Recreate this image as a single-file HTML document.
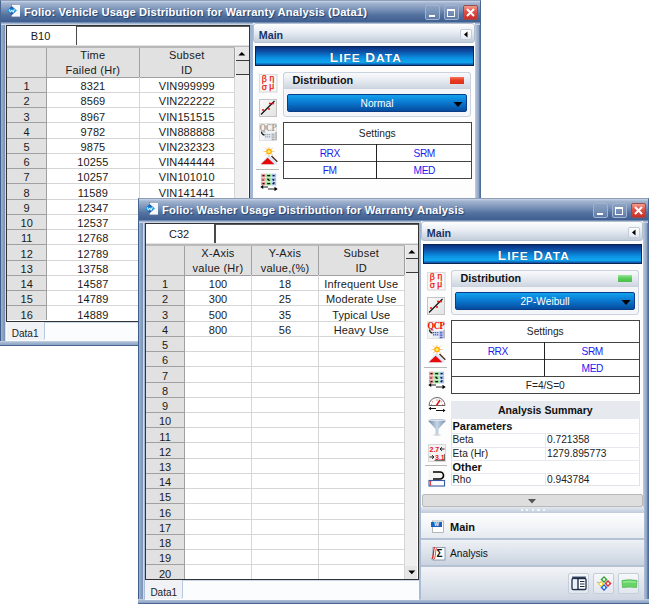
<!DOCTYPE html><html><head><meta charset="utf-8"><style>
html,body{margin:0;padding:0;}
body{width:650px;height:605px;position:relative;overflow:hidden;background:#fff;font-family:"Liberation Sans",sans-serif;}
div{position:absolute;}
.t{white-space:nowrap;line-height:1;}
.ct{display:flex;align-items:center;justify-content:center;text-align:center;white-space:nowrap;}
</style></head><body>
<div style="left:0.00px;top:0.00px;width:481.00px;height:346.00px;background:linear-gradient(#9fb2cf,#a9bbd5);border:1px solid #4a6792;border-top-color:#8d9fbb;box-sizing:border-box;"></div>
<div style="left:0.00px;top:24.00px;width:5.70px;height:322.00px;background:linear-gradient(90deg,#3e5e8c 0,#3e5e8c 1px,#9bb0cc 1.3px,#7c94b8 4.5px,#d0dcea 4.8px,#d0dcea 5.7px);"></div>
<div style="left:475.00px;top:24.00px;width:6.00px;height:322.00px;background:linear-gradient(90deg,#c0cee0 0,#a8bad4 1.5px,#90a6c4 3.5px,#5a76a0 4.8px,#4a6894 6px);"></div>
<div style="left:0.00px;top:341.00px;width:481.00px;height:5.00px;background:linear-gradient(#c8d4e4 0,#a8bad4 1.5px,#90a6c4 3.5px,#4a6894 4px,#4a6894 5px);"></div>
<div style="left:1.00px;top:1.00px;width:479.00px;height:20.70px;background:linear-gradient(#c9d5e5 0px,#a3b5d0 2px,#7d95ba 8px,#54729f 14px,#3f5f92 20.7px);"></div>
<div style="left:1.00px;top:21.70px;width:479.00px;height:3.10px;background:linear-gradient(#5a78a6,#a9bbd4 55%,#dfe6ef);"></div>
<svg style="position:absolute;left:6px;top:4px" width="14" height="14" viewBox="0 0 14 14"><defs><linearGradient id="dg" x1="0" y1="0" x2="0" y2="1"><stop offset="0" stop-color="#0a3a98"/><stop offset="0.5" stop-color="#22a6ee"/><stop offset="1" stop-color="#0a3a98"/></linearGradient></defs><rect x="5.5" y="0.3" width="9" height="12.6" fill="#f6f8fc" stroke="#6a7890" stroke-width="0.5"/><path d="M5.8 2.2 L11 6.6 L5.8 11 L0.6 6.6 Z" fill="url(#dg)"/><path d="M3.3 5.2 L4.4 8.3 L5.8 6 L7.2 8.3 L8.3 5.2" stroke="#fff" stroke-width="1" fill="none" opacity="0.9"/></svg>
<div class="t" style="left:24.00px;top:6.60px;color:#fff;font-weight:bold;font-size:11.2px;text-shadow:1px 1px 1px #23406e;letter-spacing:0.15px;">Folio: Vehicle Usage Distribution for Warranty Analysis (Data1)</div>
<div style="left:424.50px;top:5.00px;width:15.00px;height:15.00px;background:linear-gradient(#8ea3c3,#5f7ca8);border:1px solid #9fb3d1;box-sizing:border-box;border-radius:2px;"></div>
<div style="left:428.50px;top:15.00px;width:6.00px;height:2.00px;background:#fff;"></div>
<div style="left:443.50px;top:5.00px;width:15.00px;height:15.00px;background:linear-gradient(#8ea3c3,#5f7ca8);border:1px solid #9fb3d1;box-sizing:border-box;border-radius:2px;"></div>
<div style="left:447.00px;top:8.50px;width:8.00px;height:8.00px;border:1.2px solid #fff;border-top-width:2.5px;box-sizing:border-box;"></div>
<div style="left:462.50px;top:5.00px;width:15.00px;height:15.00px;background:linear-gradient(#f0a090,#e0544a 40%,#c8302a);border:1px solid #9a4a48;box-sizing:border-box;border-radius:2px;"></div>
<svg style="position:absolute;left:462.5px;top:5px" width="15" height="15"><path d="M4 4 L11 11 M11 4 L4 11" stroke="#fff" stroke-width="2"/></svg>
<div style="left:6.00px;top:24.80px;width:244.30px;height:316.20px;background:#fff;"></div>
<div style="left:6.00px;top:24.80px;width:244.30px;height:21.00px;background:#fff;border:1px solid #333;border-bottom:none;box-sizing:border-box;"></div>
<div class="ct" style="left:7.00px;top:26.60px;width:67.00px;height:18.20px;font-size:11px;color:#1a1a1a;">B10</div>
<div style="left:75.50px;top:25.80px;width:173.80px;height:1.60px;background:#5a5a5a;"></div>
<div style="left:75.50px;top:25.80px;width:1.60px;height:18.80px;background:#4a4a4a;"></div>
<div style="left:7.00px;top:44.80px;width:242.30px;height:1.00px;background:#e2e2e2;"></div>
<div style="left:7.00px;top:45.80px;width:242.30px;height:1.90px;background:#b9b9b9;"></div>
<div style="left:6.00px;top:45.80px;width:244.30px;height:276.00px;border:1.3px solid #333;border-top:none;box-sizing:border-box;"></div>
<div style="left:7.00px;top:47.70px;width:227.00px;height:29.60px;background:#e1e1e1;"></div>
<div style="left:7.00px;top:77.30px;width:39.30px;height:243.20px;background:#e1e1e1;"></div>
<div style="left:7.00px;top:77.00px;width:39.30px;height:1.00px;background:#a0a0a0;"></div>
<div style="left:46.30px;top:77.00px;width:187.70px;height:1.00px;background:#a0a0a0;"></div>
<div style="left:7.00px;top:92.00px;width:39.30px;height:1.00px;background:#a0a0a0;"></div>
<div style="left:46.30px;top:92.00px;width:187.70px;height:1.00px;background:#d6d6d6;"></div>
<div style="left:7.00px;top:107.00px;width:39.30px;height:1.00px;background:#a0a0a0;"></div>
<div style="left:46.30px;top:107.00px;width:187.70px;height:1.00px;background:#d6d6d6;"></div>
<div style="left:7.00px;top:122.00px;width:39.30px;height:1.00px;background:#a0a0a0;"></div>
<div style="left:46.30px;top:122.00px;width:187.70px;height:1.00px;background:#d6d6d6;"></div>
<div style="left:7.00px;top:138.00px;width:39.30px;height:1.00px;background:#a0a0a0;"></div>
<div style="left:46.30px;top:138.00px;width:187.70px;height:1.00px;background:#d6d6d6;"></div>
<div style="left:7.00px;top:153.00px;width:39.30px;height:1.00px;background:#a0a0a0;"></div>
<div style="left:46.30px;top:153.00px;width:187.70px;height:1.00px;background:#d6d6d6;"></div>
<div style="left:7.00px;top:168.00px;width:39.30px;height:1.00px;background:#a0a0a0;"></div>
<div style="left:46.30px;top:168.00px;width:187.70px;height:1.00px;background:#d6d6d6;"></div>
<div style="left:7.00px;top:183.00px;width:39.30px;height:1.00px;background:#a0a0a0;"></div>
<div style="left:46.30px;top:183.00px;width:187.70px;height:1.00px;background:#d6d6d6;"></div>
<div style="left:7.00px;top:199.00px;width:39.30px;height:1.00px;background:#a0a0a0;"></div>
<div style="left:46.30px;top:199.00px;width:187.70px;height:1.00px;background:#d6d6d6;"></div>
<div style="left:7.00px;top:214.00px;width:39.30px;height:1.00px;background:#a0a0a0;"></div>
<div style="left:46.30px;top:214.00px;width:187.70px;height:1.00px;background:#d6d6d6;"></div>
<div style="left:7.00px;top:229.00px;width:39.30px;height:1.00px;background:#a0a0a0;"></div>
<div style="left:46.30px;top:229.00px;width:187.70px;height:1.00px;background:#d6d6d6;"></div>
<div style="left:7.00px;top:244.00px;width:39.30px;height:1.00px;background:#a0a0a0;"></div>
<div style="left:46.30px;top:244.00px;width:187.70px;height:1.00px;background:#d6d6d6;"></div>
<div style="left:7.00px;top:260.00px;width:39.30px;height:1.00px;background:#a0a0a0;"></div>
<div style="left:46.30px;top:260.00px;width:187.70px;height:1.00px;background:#d6d6d6;"></div>
<div style="left:7.00px;top:275.00px;width:39.30px;height:1.00px;background:#a0a0a0;"></div>
<div style="left:46.30px;top:275.00px;width:187.70px;height:1.00px;background:#d6d6d6;"></div>
<div style="left:7.00px;top:290.00px;width:39.30px;height:1.00px;background:#a0a0a0;"></div>
<div style="left:46.30px;top:290.00px;width:187.70px;height:1.00px;background:#d6d6d6;"></div>
<div style="left:7.00px;top:305.00px;width:39.30px;height:1.00px;background:#a0a0a0;"></div>
<div style="left:46.30px;top:305.00px;width:187.70px;height:1.00px;background:#d6d6d6;"></div>
<div style="left:46.00px;top:47.70px;width:1.00px;height:29.60px;background:#a0a0a0;"></div>
<div style="left:46.00px;top:77.30px;width:1.00px;height:243.20px;background:#a0a0a0;"></div>
<div style="left:139.00px;top:47.70px;width:1.00px;height:29.60px;background:#a0a0a0;"></div>
<div style="left:139.00px;top:77.30px;width:1.00px;height:243.20px;background:#d6d6d6;"></div>
<div style="left:234.00px;top:47.70px;width:1.00px;height:29.60px;background:#a0a0a0;"></div>
<div style="left:234.00px;top:77.30px;width:1.00px;height:243.20px;background:#d6d6d6;"></div>
<div class="ct" style="left:46.30px;top:48.10px;width:93.20px;height:30.20px;font-size:11px;color:#1a1a1a;line-height:15px;letter-spacing:0.25px;">Time<br>Failed (Hr)</div>
<div class="ct" style="left:139.50px;top:48.10px;width:94.50px;height:30.20px;font-size:11px;color:#1a1a1a;line-height:15px;letter-spacing:0.25px;">Subset<br>ID</div>
<div class="ct" style="left:7.00px;top:78.50px;width:39.30px;height:15.23px;font-size:11px;color:#1a1a1a;">1</div>
<div class="ct" style="left:46.30px;top:78.50px;width:93.20px;height:15.23px;font-size:11px;color:#1a1a1a;letter-spacing:0.12px;">8321</div>
<div class="ct" style="left:139.50px;top:78.50px;width:94.50px;height:15.23px;font-size:11px;color:#1a1a1a;letter-spacing:0.12px;">VIN999999</div>
<div class="ct" style="left:7.00px;top:93.73px;width:39.30px;height:15.23px;font-size:11px;color:#1a1a1a;">2</div>
<div class="ct" style="left:46.30px;top:93.73px;width:93.20px;height:15.23px;font-size:11px;color:#1a1a1a;letter-spacing:0.12px;">8569</div>
<div class="ct" style="left:139.50px;top:93.73px;width:94.50px;height:15.23px;font-size:11px;color:#1a1a1a;letter-spacing:0.12px;">VIN222222</div>
<div class="ct" style="left:7.00px;top:108.96px;width:39.30px;height:15.23px;font-size:11px;color:#1a1a1a;">3</div>
<div class="ct" style="left:46.30px;top:108.96px;width:93.20px;height:15.23px;font-size:11px;color:#1a1a1a;letter-spacing:0.12px;">8967</div>
<div class="ct" style="left:139.50px;top:108.96px;width:94.50px;height:15.23px;font-size:11px;color:#1a1a1a;letter-spacing:0.12px;">VIN151515</div>
<div class="ct" style="left:7.00px;top:124.19px;width:39.30px;height:15.23px;font-size:11px;color:#1a1a1a;">4</div>
<div class="ct" style="left:46.30px;top:124.19px;width:93.20px;height:15.23px;font-size:11px;color:#1a1a1a;letter-spacing:0.12px;">9782</div>
<div class="ct" style="left:139.50px;top:124.19px;width:94.50px;height:15.23px;font-size:11px;color:#1a1a1a;letter-spacing:0.12px;">VIN888888</div>
<div class="ct" style="left:7.00px;top:139.42px;width:39.30px;height:15.23px;font-size:11px;color:#1a1a1a;">5</div>
<div class="ct" style="left:46.30px;top:139.42px;width:93.20px;height:15.23px;font-size:11px;color:#1a1a1a;letter-spacing:0.12px;">9875</div>
<div class="ct" style="left:139.50px;top:139.42px;width:94.50px;height:15.23px;font-size:11px;color:#1a1a1a;letter-spacing:0.12px;">VIN232323</div>
<div class="ct" style="left:7.00px;top:154.65px;width:39.30px;height:15.23px;font-size:11px;color:#1a1a1a;">6</div>
<div class="ct" style="left:46.30px;top:154.65px;width:93.20px;height:15.23px;font-size:11px;color:#1a1a1a;letter-spacing:0.12px;">10255</div>
<div class="ct" style="left:139.50px;top:154.65px;width:94.50px;height:15.23px;font-size:11px;color:#1a1a1a;letter-spacing:0.12px;">VIN444444</div>
<div class="ct" style="left:7.00px;top:169.88px;width:39.30px;height:15.23px;font-size:11px;color:#1a1a1a;">7</div>
<div class="ct" style="left:46.30px;top:169.88px;width:93.20px;height:15.23px;font-size:11px;color:#1a1a1a;letter-spacing:0.12px;">10257</div>
<div class="ct" style="left:139.50px;top:169.88px;width:94.50px;height:15.23px;font-size:11px;color:#1a1a1a;letter-spacing:0.12px;">VIN101010</div>
<div class="ct" style="left:7.00px;top:185.11px;width:39.30px;height:15.23px;font-size:11px;color:#1a1a1a;">8</div>
<div class="ct" style="left:46.30px;top:185.11px;width:93.20px;height:15.23px;font-size:11px;color:#1a1a1a;letter-spacing:0.12px;">11589</div>
<div class="ct" style="left:139.50px;top:185.11px;width:94.50px;height:15.23px;font-size:11px;color:#1a1a1a;letter-spacing:0.12px;">VIN141441</div>
<div class="ct" style="left:7.00px;top:200.34px;width:39.30px;height:15.23px;font-size:11px;color:#1a1a1a;">9</div>
<div class="ct" style="left:46.30px;top:200.34px;width:93.20px;height:15.23px;font-size:11px;color:#1a1a1a;letter-spacing:0.12px;">12347</div>
<div class="ct" style="left:139.50px;top:200.34px;width:94.50px;height:15.23px;font-size:11px;color:#1a1a1a;letter-spacing:0.12px;">VIN131313</div>
<div class="ct" style="left:7.00px;top:215.57px;width:39.30px;height:15.23px;font-size:11px;color:#1a1a1a;">10</div>
<div class="ct" style="left:46.30px;top:215.57px;width:93.20px;height:15.23px;font-size:11px;color:#1a1a1a;letter-spacing:0.12px;">12537</div>
<div class="ct" style="left:139.50px;top:215.57px;width:94.50px;height:15.23px;font-size:11px;color:#1a1a1a;letter-spacing:0.12px;">VIN161616</div>
<div class="ct" style="left:7.00px;top:230.80px;width:39.30px;height:15.23px;font-size:11px;color:#1a1a1a;">11</div>
<div class="ct" style="left:46.30px;top:230.80px;width:93.20px;height:15.23px;font-size:11px;color:#1a1a1a;letter-spacing:0.12px;">12768</div>
<div class="ct" style="left:139.50px;top:230.80px;width:94.50px;height:15.23px;font-size:11px;color:#1a1a1a;letter-spacing:0.12px;">VIN171717</div>
<div class="ct" style="left:7.00px;top:246.03px;width:39.30px;height:15.23px;font-size:11px;color:#1a1a1a;">12</div>
<div class="ct" style="left:46.30px;top:246.03px;width:93.20px;height:15.23px;font-size:11px;color:#1a1a1a;letter-spacing:0.12px;">12789</div>
<div class="ct" style="left:139.50px;top:246.03px;width:94.50px;height:15.23px;font-size:11px;color:#1a1a1a;letter-spacing:0.12px;">VIN181818</div>
<div class="ct" style="left:7.00px;top:261.26px;width:39.30px;height:15.23px;font-size:11px;color:#1a1a1a;">13</div>
<div class="ct" style="left:46.30px;top:261.26px;width:93.20px;height:15.23px;font-size:11px;color:#1a1a1a;letter-spacing:0.12px;">13758</div>
<div class="ct" style="left:139.50px;top:261.26px;width:94.50px;height:15.23px;font-size:11px;color:#1a1a1a;letter-spacing:0.12px;">VIN191919</div>
<div class="ct" style="left:7.00px;top:276.49px;width:39.30px;height:15.23px;font-size:11px;color:#1a1a1a;">14</div>
<div class="ct" style="left:46.30px;top:276.49px;width:93.20px;height:15.23px;font-size:11px;color:#1a1a1a;letter-spacing:0.12px;">14587</div>
<div class="ct" style="left:139.50px;top:276.49px;width:94.50px;height:15.23px;font-size:11px;color:#1a1a1a;letter-spacing:0.12px;">VIN202020</div>
<div class="ct" style="left:7.00px;top:291.72px;width:39.30px;height:15.23px;font-size:11px;color:#1a1a1a;">15</div>
<div class="ct" style="left:46.30px;top:291.72px;width:93.20px;height:15.23px;font-size:11px;color:#1a1a1a;letter-spacing:0.12px;">14789</div>
<div class="ct" style="left:139.50px;top:291.72px;width:94.50px;height:15.23px;font-size:11px;color:#1a1a1a;letter-spacing:0.12px;">VIN212121</div>
<div class="ct" style="left:7.00px;top:306.95px;width:39.30px;height:15.23px;font-size:11px;color:#1a1a1a;">16</div>
<div class="ct" style="left:46.30px;top:306.95px;width:93.20px;height:15.23px;font-size:11px;color:#1a1a1a;letter-spacing:0.12px;">14889</div>
<div class="ct" style="left:139.50px;top:306.95px;width:94.50px;height:15.23px;font-size:11px;color:#1a1a1a;letter-spacing:0.12px;">VIN242424</div>
<div style="left:234.60px;top:46.50px;width:13.70px;height:274.00px;background:#efefef;"></div>
<div style="left:235.50px;top:47.30px;width:13.50px;height:12.70px;background:#e8e8e8;"></div>
<svg style="position:absolute;left:235.40px;top:47.30px" width="14" height="13" viewBox="0 0 14 13"><path d="M3.3 8.6 L10.3 8.6 L6.8 5 Z" fill="#000"/></svg>
<div style="left:235.50px;top:60.00px;width:13.50px;height:1.00px;background:#3a3a3a;"></div>
<div style="left:235.50px;top:61.00px;width:13.50px;height:13.30px;background:#e4e4e4;"></div>
<div style="left:235.50px;top:74.30px;width:13.50px;height:1.00px;background:#3a3a3a;"></div>
<div style="left:234.50px;top:307.50px;width:13.80px;height:13.00px;background:#e6e6e6;"></div>
<svg style="position:absolute;left:235.20px;top:307.50px" width="14" height="13" viewBox="0 0 14 13"><path d="M3.3 4.5 L10.3 4.5 L6.8 8.3 Z" fill="#000"/></svg>
<div style="left:6.00px;top:321.80px;width:244.30px;height:19.20px;background:#fbfcfd;"></div>
<div style="left:45.00px;top:321.80px;width:205.30px;height:1.00px;background:#c8d6ea;"></div>
<div style="left:6.50px;top:321.80px;width:38.50px;height:18.70px;background:#f0f2f6;border-right:1px solid #b8c8e0;box-sizing:border-box;border-bottom-right-radius:2px;"></div>
<div class="t" style="left:11.80px;top:329.40px;font-size:10px;color:#1a1a1a;">Data1</div>
<div style="left:253.20px;top:23.00px;width:222.00px;height:322.00px;background:#fdfdfd;"></div>
<div style="left:253.20px;top:23.30px;width:221.80px;height:20.20px;background:linear-gradient(#fdfefe,#e9edf3 45%,#c3cddb);border:1px solid #b4c0d0;box-sizing:border-box;border-radius:3px;"></div>
<div class="t" style="left:258.80px;top:30.00px;font-size:10.7px;font-weight:bold;color:#1a3366;">Main</div>
<div style="left:460.00px;top:29.00px;width:12.00px;height:11.00px;background:linear-gradient(#ffffff,#e4e9f0);border:1px solid #c3ccd8;box-sizing:border-box;border-radius:2px;"></div>
<svg style="position:absolute;left:460px;top:29px" width="12" height="11"><path d="M4 5.5 L7.5 2.5 L7.5 8.5 Z" fill="#000"/></svg>
<div style="left:255.00px;top:45.50px;width:218.50px;height:20.00px;background:linear-gradient(#0b2f7e 0%,#0d4fa5 25%,#0a8ee0 60%,#10a8f0 85%,#0d4aa0 100%);border:1px solid #0a2454;box-sizing:border-box;"></div>
<div class="ct" style="left:255.00px;top:45.50px;width:218.50px;height:20.00px;font-size:10.6px;font-weight:bold;color:#fff;letter-spacing:0.9px;padding-left:3px;padding-top:4px;box-sizing:border-box;"><span style="display:inline-block;transform:scaleX(1.13);text-shadow:0 0 1px #0a3070"><span style="font-size:12px">L</span>IFE&nbsp;<span style="font-size:12px">D</span>ATA</span></div>
<div style="left:283.00px;top:72.00px;width:188.00px;height:44.50px;background:#f3f5f8;border:1px solid #c9d2de;box-sizing:border-box;border-radius:3px;"></div>
<div style="left:283.00px;top:72.00px;width:188.00px;height:17.00px;background:linear-gradient(#f9fafc,#e6eaf0 50%,#cfd6e0);border:1px solid #c9d2de;box-sizing:border-box;border-radius:3px 3px 0 0;"></div>
<div class="t" style="left:292.50px;top:75.30px;font-size:10.8px;font-weight:bold;color:#111;">Distribution</div>
<div style="left:449.50px;top:77.30px;width:14.00px;height:6.70px;background:linear-gradient(#f47a5a,#e83a22 45%,#e0301c);"></div>
<div style="left:287.00px;top:93.50px;width:180.00px;height:18.50px;background:linear-gradient(#12a2ee 0%,#0a7ad2 45%,#064c9e 100%);border:1px solid #0a3c8a;box-sizing:border-box;border-radius:2px;"></div>
<div class="ct" style="left:287.00px;top:94.00px;width:180.00px;height:18.50px;font-size:10.2px;color:#fff;">Normal</div>
<svg style="position:absolute;left:452px;top:100px" width="12" height="8"><path d="M1.5 2 L10.5 2 L6 7 Z" fill="#000"/></svg>
<svg style="position:absolute;left:259.30px;top:74.30px" width="19" height="19" viewBox="0 0 19 19"><rect x="0.5" y="0.5" width="17.5" height="17.5" fill="#f8f8f8" stroke="#dcdcdc" stroke-width="1.2"/><text x="5.2" y="8" font-size="8.6" font-family="Liberation Sans" fill="#f01010" stroke="#f01010" stroke-width="0.25" text-anchor="middle">β</text><text x="12.8" y="6.8" font-size="8.6" font-family="Liberation Sans" fill="#f01010" stroke="#f01010" stroke-width="0.25" text-anchor="middle">η</text><text x="5.4" y="16" font-size="8.6" font-family="Liberation Sans" fill="#f01010" stroke="#f01010" stroke-width="0.25" text-anchor="middle">σ</text><text x="12.8" y="14.6" font-size="8.6" font-family="Liberation Sans" fill="#f01010" stroke="#f01010" stroke-width="0.25" text-anchor="middle">μ</text></svg>
<svg style="position:absolute;left:259.30px;top:98.50px" width="18" height="18" viewBox="0 0 18 18"><defs><linearGradient id="lg1" x1="0" y1="0" x2="1" y2="1"><stop offset="0" stop-color="#fafafa"/><stop offset="1" stop-color="#e2e2e2"/></linearGradient></defs><rect x="0.5" y="0.5" width="17" height="17" fill="url(#lg1)" stroke="#c4c4c4"/><path d="M2 15.5 L15.5 2" stroke="#111" stroke-width="1.3"/><circle cx="4" cy="11" r="1.1" fill="#e82020"/><circle cx="10" cy="10" r="1.1" fill="#e82020"/><circle cx="11" cy="4.5" r="1.1" fill="#e82020"/><circle cx="14" cy="4.5" r="1.1" fill="#e82020"/></svg>
<svg style="position:absolute;left:259.30px;top:122.80px" width="18" height="18" viewBox="0 0 18 18"><rect x="0.5" y="0.5" width="17" height="17" fill="#f4f4f4" stroke="#e2e2e2"/><text x="9" y="7.8" font-size="8.6" font-weight="bold" font-family="Liberation Serif" fill="#a0a0a0" text-anchor="middle" letter-spacing="-0.4" transform="translate(0,-1.6) scale(1,1.2)">QCP</text><rect x="5" y="9.5" width="12" height="7.5" fill="#e8eef8"/><path d="M17 9 V17" stroke="#909090" stroke-width="1"/><rect x="6" y="11.0" width="1.4" height="1.3" fill="#a8a8a8"/><rect x="6" y="13.2" width="1.4" height="1.3" fill="#a8a8a8"/><rect x="8" y="11.0" width="1.4" height="1.3" fill="#a8a8a8"/><rect x="8" y="13.2" width="1.4" height="1.3" fill="#a8a8a8"/><rect x="10" y="11.0" width="1.4" height="1.3" fill="#a8a8a8"/><rect x="10" y="13.2" width="1.4" height="1.3" fill="#a8a8a8"/><rect x="12.6" y="10.6" width="3" height="1.2" fill="#a8a8a8"/><rect x="12.6" y="12.4" width="3" height="1.2" fill="#a8a8a8"/><rect x="12.6" y="14.2" width="3" height="1.2" fill="#a8a8a8"/><rect x="12.6" y="16.0" width="3" height="1.2" fill="#a8a8a8"/><path d="M2.5 8.5 Q2.5 11.5 5.5 12" stroke="#222" fill="none" stroke-width="1.3"/></svg>
<svg style="position:absolute;left:259.50px;top:147.00px" width="18" height="18" viewBox="0 0 18 18"><path d="M0 17.5 L8 8.5 L12 11 L17.5 17.5 Z" fill="#dbe6fb"/><path d="M0.8 17.3 L7.6 10.8 L14.4 17.3 Z" fill="#e60a0a"/><path d="M11.5 9 L17.3 14.8" stroke="#4a2a18" stroke-width="1.4"/><path d="M9 -0.5 V9.5 M3.5 4.5 H14.5 M5.2 0.7 L12.8 8.3 M12.8 0.7 L5.2 8.3" stroke="#f5a848" stroke-width="0.8" opacity="0.8"/><circle cx="9" cy="4.5" r="2.8" fill="#ffa800"/><circle cx="9" cy="4.5" r="1.5" fill="#fff070"/></svg>
<div style="left:256.00px;top:168.50px;width:23.00px;height:1.50px;background:#b9b9b9;"></div>
<svg style="position:absolute;left:259.50px;top:173.00px" width="18" height="18" viewBox="0 0 18 18"><rect x="0.6" y="0.4" width="16.4" height="12.4" fill="#f4f4f4"/><rect x="1.0" y="0.8" width="4.6" height="3.5" fill="#f49a9a"/><rect x="1.0" y="4.8" width="4.6" height="3.5" fill="#f49a9a"/><rect x="1.0" y="8.8" width="4.6" height="3.5" fill="#f49a9a"/><rect x="6.2" y="0.8" width="4.6" height="3.5" fill="#94e294"/><rect x="6.2" y="4.8" width="4.6" height="3.5" fill="#94e294"/><rect x="6.2" y="8.8" width="4.6" height="3.5" fill="#94e294"/><rect x="11.4" y="0.8" width="4.6" height="3.5" fill="#9ec0f2"/><rect x="11.4" y="4.8" width="4.6" height="3.5" fill="#9ec0f2"/><rect x="11.4" y="8.8" width="4.6" height="3.5" fill="#9ec0f2"/><path d="M2.5 2.6h2 M3 6.6v1 M2.5 10.6h2 M7.2 2.6h3 M7.5 5.8l2 2 M7.2 10.6h3 M12.6 2.6h2 M12.6 6.2l1.6 1.2 M12.8 11l1.6-1.6" stroke="#111" stroke-width="1.4"/><path d="M2 14 H8 M8 16 H15" stroke="#222" stroke-width="1.2"/><path d="M0.3 14 L3.2 12 L3.2 16 Z M17.7 16 L14.5 13.8 L14.5 18.2 Z" fill="#000"/></svg>
<svg style="position:absolute;left:260.00px;top:196.50px" width="18" height="19" viewBox="0 0 18 19"><path d="M1 10.5 A8 8 0 0 1 17 10.5 Z" fill="#fff" stroke="#666" stroke-width="1"/><path d="M9 4.5v1 M4.2 6.5l.7.7 M13.8 6.5l-.7.7 M3 10h1 M14 10h1" stroke="#e02020" stroke-width="0.9"/><path d="M8.5 10.5 L12 5" stroke="#e01818" stroke-width="1.5"/><path d="M2 13.5 H8 M8 15.5 H16" stroke="#111" stroke-width="1"/><path d="M0.5 13.5 L3 11.8 L3 15.2 Z M17.5 15.5 L15 13.8 L15 17.2 Z" fill="#111"/></svg>
<div style="left:283.00px;top:122.00px;width:188.50px;height:57.00px;background:#fff;border:1px solid #444;box-sizing:border-box;"></div>
<div style="left:283.00px;top:144.20px;width:188.50px;height:1.00px;background:#444;"></div>
<div style="left:283.00px;top:161.20px;width:188.50px;height:1.00px;background:#444;"></div>
<div style="left:376.20px;top:144.20px;width:1.00px;height:34.80px;background:#222;"></div>
<div class="ct" style="left:283.00px;top:122.00px;width:188.50px;height:22.50px;font-size:10.2px;color:#222;padding-top:1px;box-sizing:border-box;">Settings</div>
<div class="ct" style="left:283.00px;top:144.50px;width:93.50px;height:17.00px;font-size:10.2px;color:#1c1cf0;letter-spacing:-0.45px;padding-top:1px;box-sizing:border-box;">RRX</div>
<div class="ct" style="left:377.00px;top:144.50px;width:94.50px;height:17.00px;font-size:10.2px;color:#1c1cf0;letter-spacing:-0.45px;padding-top:1px;box-sizing:border-box;">SRM</div>
<div class="ct" style="left:283.00px;top:161.50px;width:93.50px;height:17.00px;font-size:10.2px;color:#1c1cf0;letter-spacing:-0.45px;padding-top:1px;box-sizing:border-box;">FM</div>
<div class="ct" style="left:377.00px;top:161.50px;width:94.50px;height:17.00px;font-size:10.2px;color:#1c1cf0;letter-spacing:-0.45px;padding-top:1px;box-sizing:border-box;">MED</div>
<div style="left:138.00px;top:198.00px;width:511.00px;height:406.00px;background:linear-gradient(#9fb2cf,#a9bbd5);border:1px solid #4a6792;border-top-color:#8d9fbb;box-sizing:border-box;"></div>
<div style="left:138.00px;top:222.00px;width:5.70px;height:382.00px;background:linear-gradient(90deg,#3e5e8c 0,#3e5e8c 1px,#9bb0cc 1.3px,#7c94b8 4.5px,#d0dcea 4.8px,#d0dcea 5.7px);"></div>
<div style="left:643.00px;top:222.00px;width:6.00px;height:382.00px;background:linear-gradient(90deg,#c0cee0 0,#a8bad4 1.5px,#90a6c4 3.5px,#5a76a0 4.8px,#4a6894 6px);"></div>
<div style="left:138.00px;top:599.00px;width:511.00px;height:5.00px;background:linear-gradient(#c8d4e4 0,#a8bad4 1.5px,#90a6c4 3.5px,#4a6894 4px,#4a6894 5px);"></div>
<div style="left:139.00px;top:199.00px;width:509.00px;height:20.70px;background:linear-gradient(#c9d5e5 0px,#a3b5d0 2px,#7d95ba 8px,#54729f 14px,#3f5f92 20.7px);"></div>
<div style="left:139.00px;top:219.70px;width:509.00px;height:3.10px;background:linear-gradient(#5a78a6,#a9bbd4 55%,#dfe6ef);"></div>
<svg style="position:absolute;left:144px;top:202px" width="14" height="14" viewBox="0 0 14 14"><defs><linearGradient id="dg" x1="0" y1="0" x2="0" y2="1"><stop offset="0" stop-color="#0a3a98"/><stop offset="0.5" stop-color="#22a6ee"/><stop offset="1" stop-color="#0a3a98"/></linearGradient></defs><rect x="5.5" y="0.3" width="9" height="12.6" fill="#f6f8fc" stroke="#6a7890" stroke-width="0.5"/><path d="M5.8 2.2 L11 6.6 L5.8 11 L0.6 6.6 Z" fill="url(#dg)"/><path d="M3.3 5.2 L4.4 8.3 L5.8 6 L7.2 8.3 L8.3 5.2" stroke="#fff" stroke-width="1" fill="none" opacity="0.9"/></svg>
<div class="t" style="left:162.00px;top:204.60px;color:#fff;font-weight:bold;font-size:11.2px;text-shadow:1px 1px 1px #23406e;letter-spacing:0.15px;">Folio: Washer Usage Distribution for Warranty Analysis</div>
<div style="left:592.50px;top:203.00px;width:15.00px;height:15.00px;background:linear-gradient(#8ea3c3,#5f7ca8);border:1px solid #9fb3d1;box-sizing:border-box;border-radius:2px;"></div>
<div style="left:596.50px;top:213.00px;width:6.00px;height:2.00px;background:#fff;"></div>
<div style="left:611.50px;top:203.00px;width:15.00px;height:15.00px;background:linear-gradient(#8ea3c3,#5f7ca8);border:1px solid #9fb3d1;box-sizing:border-box;border-radius:2px;"></div>
<div style="left:615.00px;top:206.50px;width:8.00px;height:8.00px;border:1.2px solid #fff;border-top-width:2.5px;box-sizing:border-box;"></div>
<div style="left:630.50px;top:203.00px;width:15.00px;height:15.00px;background:linear-gradient(#f0a090,#e0544a 40%,#c8302a);border:1px solid #9a4a48;box-sizing:border-box;border-radius:2px;"></div>
<svg style="position:absolute;left:630.5px;top:203px" width="15" height="15"><path d="M4 4 L11 11 M11 4 L4 11" stroke="#fff" stroke-width="2"/></svg>
<div style="left:144.60px;top:222.80px;width:274.50px;height:377.20px;background:#fff;"></div>
<div style="left:144.60px;top:222.80px;width:274.50px;height:21.00px;background:#fff;border:1px solid #333;border-bottom:none;box-sizing:border-box;"></div>
<div class="ct" style="left:145.60px;top:224.60px;width:67.10px;height:18.20px;font-size:11px;color:#1a1a1a;">C32</div>
<div style="left:214.20px;top:223.80px;width:203.90px;height:1.60px;background:#5a5a5a;"></div>
<div style="left:214.20px;top:223.80px;width:1.60px;height:18.80px;background:#4a4a4a;"></div>
<div style="left:145.60px;top:242.80px;width:272.50px;height:1.00px;background:#e2e2e2;"></div>
<div style="left:145.60px;top:243.80px;width:272.50px;height:1.90px;background:#b9b9b9;"></div>
<div style="left:144.60px;top:243.80px;width:274.50px;height:336.30px;border:1.3px solid #333;border-top:none;box-sizing:border-box;"></div>
<div style="left:145.60px;top:245.70px;width:258.40px;height:29.70px;background:#e1e1e1;"></div>
<div style="left:145.60px;top:275.40px;width:38.90px;height:303.40px;background:#e1e1e1;"></div>
<div style="left:145.60px;top:275.00px;width:38.90px;height:1.00px;background:#a0a0a0;"></div>
<div style="left:184.50px;top:275.00px;width:219.50px;height:1.00px;background:#a0a0a0;"></div>
<div style="left:145.60px;top:290.00px;width:38.90px;height:1.00px;background:#a0a0a0;"></div>
<div style="left:184.50px;top:290.00px;width:219.50px;height:1.00px;background:#d6d6d6;"></div>
<div style="left:145.60px;top:305.00px;width:38.90px;height:1.00px;background:#a0a0a0;"></div>
<div style="left:184.50px;top:305.00px;width:219.50px;height:1.00px;background:#d6d6d6;"></div>
<div style="left:145.60px;top:321.00px;width:38.90px;height:1.00px;background:#a0a0a0;"></div>
<div style="left:184.50px;top:321.00px;width:219.50px;height:1.00px;background:#d6d6d6;"></div>
<div style="left:145.60px;top:336.00px;width:38.90px;height:1.00px;background:#a0a0a0;"></div>
<div style="left:184.50px;top:336.00px;width:219.50px;height:1.00px;background:#d6d6d6;"></div>
<div style="left:145.60px;top:351.00px;width:38.90px;height:1.00px;background:#a0a0a0;"></div>
<div style="left:184.50px;top:351.00px;width:219.50px;height:1.00px;background:#d6d6d6;"></div>
<div style="left:145.60px;top:366.00px;width:38.90px;height:1.00px;background:#a0a0a0;"></div>
<div style="left:184.50px;top:366.00px;width:219.50px;height:1.00px;background:#d6d6d6;"></div>
<div style="left:145.60px;top:382.00px;width:38.90px;height:1.00px;background:#a0a0a0;"></div>
<div style="left:184.50px;top:382.00px;width:219.50px;height:1.00px;background:#d6d6d6;"></div>
<div style="left:145.60px;top:397.00px;width:38.90px;height:1.00px;background:#a0a0a0;"></div>
<div style="left:184.50px;top:397.00px;width:219.50px;height:1.00px;background:#d6d6d6;"></div>
<div style="left:145.60px;top:412.00px;width:38.90px;height:1.00px;background:#a0a0a0;"></div>
<div style="left:184.50px;top:412.00px;width:219.50px;height:1.00px;background:#d6d6d6;"></div>
<div style="left:145.60px;top:427.00px;width:38.90px;height:1.00px;background:#a0a0a0;"></div>
<div style="left:184.50px;top:427.00px;width:219.50px;height:1.00px;background:#d6d6d6;"></div>
<div style="left:145.60px;top:442.00px;width:38.90px;height:1.00px;background:#a0a0a0;"></div>
<div style="left:184.50px;top:442.00px;width:219.50px;height:1.00px;background:#d6d6d6;"></div>
<div style="left:145.60px;top:458.00px;width:38.90px;height:1.00px;background:#a0a0a0;"></div>
<div style="left:184.50px;top:458.00px;width:219.50px;height:1.00px;background:#d6d6d6;"></div>
<div style="left:145.60px;top:473.00px;width:38.90px;height:1.00px;background:#a0a0a0;"></div>
<div style="left:184.50px;top:473.00px;width:219.50px;height:1.00px;background:#d6d6d6;"></div>
<div style="left:145.60px;top:488.00px;width:38.90px;height:1.00px;background:#a0a0a0;"></div>
<div style="left:184.50px;top:488.00px;width:219.50px;height:1.00px;background:#d6d6d6;"></div>
<div style="left:145.60px;top:503.00px;width:38.90px;height:1.00px;background:#a0a0a0;"></div>
<div style="left:184.50px;top:503.00px;width:219.50px;height:1.00px;background:#d6d6d6;"></div>
<div style="left:145.60px;top:519.00px;width:38.90px;height:1.00px;background:#a0a0a0;"></div>
<div style="left:184.50px;top:519.00px;width:219.50px;height:1.00px;background:#d6d6d6;"></div>
<div style="left:145.60px;top:534.00px;width:38.90px;height:1.00px;background:#a0a0a0;"></div>
<div style="left:184.50px;top:534.00px;width:219.50px;height:1.00px;background:#d6d6d6;"></div>
<div style="left:145.60px;top:549.00px;width:38.90px;height:1.00px;background:#a0a0a0;"></div>
<div style="left:184.50px;top:549.00px;width:219.50px;height:1.00px;background:#d6d6d6;"></div>
<div style="left:145.60px;top:564.00px;width:38.90px;height:1.00px;background:#a0a0a0;"></div>
<div style="left:184.50px;top:564.00px;width:219.50px;height:1.00px;background:#d6d6d6;"></div>
<div style="left:184.00px;top:245.70px;width:1.00px;height:29.70px;background:#a0a0a0;"></div>
<div style="left:184.00px;top:275.40px;width:1.00px;height:303.40px;background:#a0a0a0;"></div>
<div style="left:251.00px;top:245.70px;width:1.00px;height:29.70px;background:#a0a0a0;"></div>
<div style="left:251.00px;top:275.40px;width:1.00px;height:303.40px;background:#d6d6d6;"></div>
<div style="left:318.00px;top:245.70px;width:1.00px;height:29.70px;background:#a0a0a0;"></div>
<div style="left:318.00px;top:275.40px;width:1.00px;height:303.40px;background:#d6d6d6;"></div>
<div style="left:404.00px;top:245.70px;width:1.00px;height:29.70px;background:#a0a0a0;"></div>
<div style="left:404.00px;top:275.40px;width:1.00px;height:303.40px;background:#d6d6d6;"></div>
<div class="ct" style="left:184.50px;top:246.10px;width:67.00px;height:30.30px;font-size:11px;color:#1a1a1a;line-height:15px;letter-spacing:0.25px;">X-Axis<br>value (Hr)</div>
<div class="ct" style="left:251.50px;top:246.10px;width:67.00px;height:30.30px;font-size:11px;color:#1a1a1a;line-height:15px;letter-spacing:0.25px;">Y-Axis<br>value,(%)</div>
<div class="ct" style="left:318.50px;top:246.10px;width:85.50px;height:30.30px;font-size:11px;color:#1a1a1a;line-height:15px;letter-spacing:0.25px;">Subset<br>ID</div>
<div class="ct" style="left:145.60px;top:276.60px;width:38.90px;height:15.23px;font-size:11px;color:#1a1a1a;">1</div>
<div class="ct" style="left:184.50px;top:276.60px;width:67.00px;height:15.23px;font-size:11px;color:#1a1a1a;letter-spacing:0.12px;">100</div>
<div class="ct" style="left:251.50px;top:276.60px;width:67.00px;height:15.23px;font-size:11px;color:#1a1a1a;letter-spacing:0.12px;">18</div>
<div class="ct" style="left:318.50px;top:276.60px;width:85.50px;height:15.23px;font-size:11px;color:#1a1a1a;letter-spacing:0.12px;">Infrequent Use</div>
<div class="ct" style="left:145.60px;top:291.83px;width:38.90px;height:15.23px;font-size:11px;color:#1a1a1a;">2</div>
<div class="ct" style="left:184.50px;top:291.83px;width:67.00px;height:15.23px;font-size:11px;color:#1a1a1a;letter-spacing:0.12px;">300</div>
<div class="ct" style="left:251.50px;top:291.83px;width:67.00px;height:15.23px;font-size:11px;color:#1a1a1a;letter-spacing:0.12px;">25</div>
<div class="ct" style="left:318.50px;top:291.83px;width:85.50px;height:15.23px;font-size:11px;color:#1a1a1a;letter-spacing:0.12px;">Moderate Use</div>
<div class="ct" style="left:145.60px;top:307.06px;width:38.90px;height:15.23px;font-size:11px;color:#1a1a1a;">3</div>
<div class="ct" style="left:184.50px;top:307.06px;width:67.00px;height:15.23px;font-size:11px;color:#1a1a1a;letter-spacing:0.12px;">500</div>
<div class="ct" style="left:251.50px;top:307.06px;width:67.00px;height:15.23px;font-size:11px;color:#1a1a1a;letter-spacing:0.12px;">35</div>
<div class="ct" style="left:318.50px;top:307.06px;width:85.50px;height:15.23px;font-size:11px;color:#1a1a1a;letter-spacing:0.12px;">Typical Use</div>
<div class="ct" style="left:145.60px;top:322.29px;width:38.90px;height:15.23px;font-size:11px;color:#1a1a1a;">4</div>
<div class="ct" style="left:184.50px;top:322.29px;width:67.00px;height:15.23px;font-size:11px;color:#1a1a1a;letter-spacing:0.12px;">800</div>
<div class="ct" style="left:251.50px;top:322.29px;width:67.00px;height:15.23px;font-size:11px;color:#1a1a1a;letter-spacing:0.12px;">56</div>
<div class="ct" style="left:318.50px;top:322.29px;width:85.50px;height:15.23px;font-size:11px;color:#1a1a1a;letter-spacing:0.12px;">Heavy Use</div>
<div class="ct" style="left:145.60px;top:337.52px;width:38.90px;height:15.23px;font-size:11px;color:#1a1a1a;">5</div>
<div class="ct" style="left:145.60px;top:352.75px;width:38.90px;height:15.23px;font-size:11px;color:#1a1a1a;">6</div>
<div class="ct" style="left:145.60px;top:367.98px;width:38.90px;height:15.23px;font-size:11px;color:#1a1a1a;">7</div>
<div class="ct" style="left:145.60px;top:383.21px;width:38.90px;height:15.23px;font-size:11px;color:#1a1a1a;">8</div>
<div class="ct" style="left:145.60px;top:398.44px;width:38.90px;height:15.23px;font-size:11px;color:#1a1a1a;">9</div>
<div class="ct" style="left:145.60px;top:413.67px;width:38.90px;height:15.23px;font-size:11px;color:#1a1a1a;">10</div>
<div class="ct" style="left:145.60px;top:428.90px;width:38.90px;height:15.23px;font-size:11px;color:#1a1a1a;">11</div>
<div class="ct" style="left:145.60px;top:444.13px;width:38.90px;height:15.23px;font-size:11px;color:#1a1a1a;">12</div>
<div class="ct" style="left:145.60px;top:459.36px;width:38.90px;height:15.23px;font-size:11px;color:#1a1a1a;">13</div>
<div class="ct" style="left:145.60px;top:474.59px;width:38.90px;height:15.23px;font-size:11px;color:#1a1a1a;">14</div>
<div class="ct" style="left:145.60px;top:489.82px;width:38.90px;height:15.23px;font-size:11px;color:#1a1a1a;">15</div>
<div class="ct" style="left:145.60px;top:505.05px;width:38.90px;height:15.23px;font-size:11px;color:#1a1a1a;">16</div>
<div class="ct" style="left:145.60px;top:520.28px;width:38.90px;height:15.23px;font-size:11px;color:#1a1a1a;">17</div>
<div class="ct" style="left:145.60px;top:535.51px;width:38.90px;height:15.23px;font-size:11px;color:#1a1a1a;">18</div>
<div class="ct" style="left:145.60px;top:550.74px;width:38.90px;height:15.23px;font-size:11px;color:#1a1a1a;">19</div>
<div class="ct" style="left:145.60px;top:565.97px;width:38.90px;height:15.23px;font-size:11px;color:#1a1a1a;">20</div>
<div style="left:404.60px;top:244.50px;width:12.50px;height:334.30px;background:#efefef;"></div>
<div style="left:405.50px;top:245.30px;width:12.30px;height:12.70px;background:#e8e8e8;"></div>
<svg style="position:absolute;left:405.40px;top:245.30px" width="14" height="13" viewBox="0 0 14 13"><path d="M3.3 8.6 L10.3 8.6 L6.8 5 Z" fill="#000"/></svg>
<div style="left:405.50px;top:258.00px;width:12.30px;height:1.00px;background:#3a3a3a;"></div>
<div style="left:405.50px;top:259.00px;width:12.30px;height:13.30px;background:#e4e4e4;"></div>
<div style="left:405.50px;top:272.30px;width:12.30px;height:1.00px;background:#3a3a3a;"></div>
<div style="left:404.50px;top:565.80px;width:12.60px;height:13.00px;background:#e6e6e6;"></div>
<svg style="position:absolute;left:405.20px;top:565.80px" width="14" height="13" viewBox="0 0 14 13"><path d="M3.3 4.5 L10.3 4.5 L6.8 8.3 Z" fill="#000"/></svg>
<div style="left:144.60px;top:580.10px;width:274.50px;height:19.90px;background:#fbfcfd;"></div>
<div style="left:183.00px;top:580.10px;width:236.10px;height:1.00px;background:#c8d6ea;"></div>
<div style="left:145.10px;top:580.10px;width:37.90px;height:19.40px;background:#f0f2f6;border-right:1px solid #b8c8e0;box-sizing:border-box;border-bottom-right-radius:2px;"></div>
<div class="t" style="left:150.40px;top:587.70px;font-size:10px;color:#1a1a1a;">Data1</div>
<div style="left:421.20px;top:221.00px;width:222.00px;height:378.00px;background:#fdfdfd;"></div>
<div style="left:421.20px;top:221.30px;width:221.80px;height:20.20px;background:linear-gradient(#fdfefe,#e9edf3 45%,#c3cddb);border:1px solid #b4c0d0;box-sizing:border-box;border-radius:3px;"></div>
<div class="t" style="left:426.80px;top:228.00px;font-size:10.7px;font-weight:bold;color:#1a3366;">Main</div>
<div style="left:628.00px;top:227.00px;width:12.00px;height:11.00px;background:linear-gradient(#ffffff,#e4e9f0);border:1px solid #c3ccd8;box-sizing:border-box;border-radius:2px;"></div>
<svg style="position:absolute;left:628px;top:227px" width="12" height="11"><path d="M4 5.5 L7.5 2.5 L7.5 8.5 Z" fill="#000"/></svg>
<div style="left:423.00px;top:243.50px;width:218.50px;height:20.00px;background:linear-gradient(#0b2f7e 0%,#0d4fa5 25%,#0a8ee0 60%,#10a8f0 85%,#0d4aa0 100%);border:1px solid #0a2454;box-sizing:border-box;"></div>
<div class="ct" style="left:423.00px;top:243.50px;width:218.50px;height:20.00px;font-size:10.6px;font-weight:bold;color:#fff;letter-spacing:0.9px;padding-left:3px;padding-top:4px;box-sizing:border-box;"><span style="display:inline-block;transform:scaleX(1.13);text-shadow:0 0 1px #0a3070"><span style="font-size:12px">L</span>IFE&nbsp;<span style="font-size:12px">D</span>ATA</span></div>
<div style="left:451.00px;top:270.00px;width:188.00px;height:44.50px;background:#f3f5f8;border:1px solid #c9d2de;box-sizing:border-box;border-radius:3px;"></div>
<div style="left:451.00px;top:270.00px;width:188.00px;height:17.00px;background:linear-gradient(#f9fafc,#e6eaf0 50%,#cfd6e0);border:1px solid #c9d2de;box-sizing:border-box;border-radius:3px 3px 0 0;"></div>
<div class="t" style="left:460.50px;top:273.30px;font-size:10.8px;font-weight:bold;color:#111;">Distribution</div>
<div style="left:617.50px;top:275.30px;width:14.00px;height:6.70px;background:linear-gradient(#9ae69a,#5ccc5c 45%,#4cbf4c);"></div>
<div style="left:455.00px;top:291.50px;width:180.00px;height:18.50px;background:linear-gradient(#12a2ee 0%,#0a7ad2 45%,#064c9e 100%);border:1px solid #0a3c8a;box-sizing:border-box;border-radius:2px;"></div>
<div class="ct" style="left:455.00px;top:292.00px;width:180.00px;height:18.50px;font-size:10.2px;color:#fff;">2P-Weibull</div>
<svg style="position:absolute;left:620px;top:298px" width="12" height="8"><path d="M1.5 2 L10.5 2 L6 7 Z" fill="#000"/></svg>
<svg style="position:absolute;left:427.30px;top:272.30px" width="19" height="19" viewBox="0 0 19 19"><rect x="0.5" y="0.5" width="17.5" height="17.5" fill="#f8f8f8" stroke="#dcdcdc" stroke-width="1.2"/><text x="5.2" y="8" font-size="8.6" font-family="Liberation Sans" fill="#f01010" stroke="#f01010" stroke-width="0.25" text-anchor="middle">β</text><text x="12.8" y="6.8" font-size="8.6" font-family="Liberation Sans" fill="#f01010" stroke="#f01010" stroke-width="0.25" text-anchor="middle">η</text><text x="5.4" y="16" font-size="8.6" font-family="Liberation Sans" fill="#f01010" stroke="#f01010" stroke-width="0.25" text-anchor="middle">σ</text><text x="12.8" y="14.6" font-size="8.6" font-family="Liberation Sans" fill="#f01010" stroke="#f01010" stroke-width="0.25" text-anchor="middle">μ</text></svg>
<svg style="position:absolute;left:427.30px;top:296.50px" width="18" height="18" viewBox="0 0 18 18"><defs><linearGradient id="lg1" x1="0" y1="0" x2="1" y2="1"><stop offset="0" stop-color="#fafafa"/><stop offset="1" stop-color="#e2e2e2"/></linearGradient></defs><rect x="0.5" y="0.5" width="17" height="17" fill="url(#lg1)" stroke="#c4c4c4"/><path d="M2 15.5 L15.5 2" stroke="#111" stroke-width="1.3"/><circle cx="4" cy="11" r="1.1" fill="#e82020"/><circle cx="10" cy="10" r="1.1" fill="#e82020"/><circle cx="11" cy="4.5" r="1.1" fill="#e82020"/><circle cx="14" cy="4.5" r="1.1" fill="#e82020"/></svg>
<svg style="position:absolute;left:427.30px;top:320.80px" width="18" height="18" viewBox="0 0 18 18"><rect x="0.5" y="0.5" width="17" height="17" fill="#f4f4f4" stroke="#e2e2e2"/><text x="9" y="7.8" font-size="8.6" font-weight="bold" font-family="Liberation Serif" fill="#f00000" text-anchor="middle" letter-spacing="-0.4" transform="translate(0,-1.6) scale(1,1.2)">QCP</text><rect x="5" y="9.5" width="12" height="7.5" fill="#e8eef8"/><path d="M17 9 V17" stroke="#909090" stroke-width="1"/><rect x="6" y="11.0" width="1.4" height="1.3" fill="#4a58c8"/><rect x="6" y="13.2" width="1.4" height="1.3" fill="#4a58c8"/><rect x="8" y="11.0" width="1.4" height="1.3" fill="#4a58c8"/><rect x="8" y="13.2" width="1.4" height="1.3" fill="#4a58c8"/><rect x="10" y="11.0" width="1.4" height="1.3" fill="#4a58c8"/><rect x="10" y="13.2" width="1.4" height="1.3" fill="#4a58c8"/><rect x="12.6" y="10.6" width="3" height="1.2" fill="#4a58c8"/><rect x="12.6" y="12.4" width="3" height="1.2" fill="#4a58c8"/><rect x="12.6" y="14.2" width="3" height="1.2" fill="#4a58c8"/><rect x="12.6" y="16.0" width="3" height="1.2" fill="#4a58c8"/><path d="M2.5 8.5 Q2.5 11.5 5.5 12" stroke="#222" fill="none" stroke-width="1.3"/></svg>
<svg style="position:absolute;left:427.50px;top:345.00px" width="18" height="18" viewBox="0 0 18 18"><path d="M0 17.5 L8 8.5 L12 11 L17.5 17.5 Z" fill="#dbe6fb"/><path d="M0.8 17.3 L7.6 10.8 L14.4 17.3 Z" fill="#e60a0a"/><path d="M11.5 9 L17.3 14.8" stroke="#4a2a18" stroke-width="1.4"/><path d="M9 -0.5 V9.5 M3.5 4.5 H14.5 M5.2 0.7 L12.8 8.3 M12.8 0.7 L5.2 8.3" stroke="#f5a848" stroke-width="0.8" opacity="0.8"/><circle cx="9" cy="4.5" r="2.8" fill="#ffa800"/><circle cx="9" cy="4.5" r="1.5" fill="#fff070"/></svg>
<div style="left:424.00px;top:366.50px;width:23.00px;height:1.50px;background:#b9b9b9;"></div>
<svg style="position:absolute;left:427.50px;top:371.00px" width="18" height="18" viewBox="0 0 18 18"><rect x="0.6" y="0.4" width="16.4" height="12.4" fill="#f4f4f4"/><rect x="1.0" y="0.8" width="4.6" height="3.5" fill="#f49a9a"/><rect x="1.0" y="4.8" width="4.6" height="3.5" fill="#f49a9a"/><rect x="1.0" y="8.8" width="4.6" height="3.5" fill="#f49a9a"/><rect x="6.2" y="0.8" width="4.6" height="3.5" fill="#94e294"/><rect x="6.2" y="4.8" width="4.6" height="3.5" fill="#94e294"/><rect x="6.2" y="8.8" width="4.6" height="3.5" fill="#94e294"/><rect x="11.4" y="0.8" width="4.6" height="3.5" fill="#9ec0f2"/><rect x="11.4" y="4.8" width="4.6" height="3.5" fill="#9ec0f2"/><rect x="11.4" y="8.8" width="4.6" height="3.5" fill="#9ec0f2"/><path d="M2.5 2.6h2 M3 6.6v1 M2.5 10.6h2 M7.2 2.6h3 M7.5 5.8l2 2 M7.2 10.6h3 M12.6 2.6h2 M12.6 6.2l1.6 1.2 M12.8 11l1.6-1.6" stroke="#111" stroke-width="1.4"/><path d="M2 14 H8 M8 16 H15" stroke="#222" stroke-width="1.2"/><path d="M0.3 14 L3.2 12 L3.2 16 Z M17.7 16 L14.5 13.8 L14.5 18.2 Z" fill="#000"/></svg>
<svg style="position:absolute;left:428.00px;top:394.50px" width="18" height="19" viewBox="0 0 18 19"><path d="M1 10.5 A8 8 0 0 1 17 10.5 Z" fill="#fff" stroke="#666" stroke-width="1"/><path d="M9 4.5v1 M4.2 6.5l.7.7 M13.8 6.5l-.7.7 M3 10h1 M14 10h1" stroke="#e02020" stroke-width="0.9"/><path d="M8.5 10.5 L12 5" stroke="#e01818" stroke-width="1.5"/><path d="M2 13.5 H8 M8 15.5 H16" stroke="#111" stroke-width="1"/><path d="M0.5 13.5 L3 11.8 L3 15.2 Z M17.5 15.5 L15 13.8 L15 17.2 Z" fill="#111"/></svg>
<svg style="position:absolute;left:428.00px;top:419.00px" width="18" height="17" viewBox="0 0 18 17"><defs><linearGradient id="fg" x1="0" y1="0" x2="1" y2="0"><stop offset="0" stop-color="#6c86a8"/><stop offset="0.5" stop-color="#c8d6e6"/><stop offset="1" stop-color="#7890b0"/></linearGradient></defs><ellipse cx="9" cy="2" rx="8.5" ry="1.8" fill="#dde6f0" stroke="#8aa0bc" stroke-width="0.6"/><path d="M0.5 2 L7.5 10 L7.5 15.5 L10.5 15.5 L10.5 10 L17.5 2 Z" fill="url(#fg)"/><ellipse cx="9" cy="16" rx="4" ry="0.8" fill="#b8b8b8" opacity="0.6"/></svg>
<svg style="position:absolute;left:428.00px;top:444.00px" width="18" height="18" viewBox="0 0 18 18"><rect x="0.5" y="0.5" width="17" height="17" fill="#f2f2f2" stroke="#d8d8d8"/><text x="1.5" y="7.5" font-size="7" font-weight="bold" font-family="Liberation Sans" fill="#e81010">2.7</text><path d="M12 5 H16.5 M12 5 l2 -1.8 M12 5 l2 1.8" stroke="#111" stroke-width="0.9" fill="none"/><path d="M1.5 13 H6 M6 13 l-2 -1.8 M6 13 l-2 1.8" stroke="#111" stroke-width="0.9" fill="none"/><text x="7" y="15.5" font-size="7" font-weight="bold" font-family="Liberation Sans" fill="#e81010">3.1</text><path d="M6.5 16.5 H16.5 V10" stroke="#333" stroke-width="0.7" fill="none"/></svg>
<div style="left:425.00px;top:465.20px;width:22.00px;height:1.30px;background:#b9b9b9;"></div>
<svg style="position:absolute;left:428.00px;top:470.00px" width="18" height="17" viewBox="0 0 18 17"><rect x="0.5" y="0.5" width="17" height="16" fill="#f5f5f5"/><path d="M5 2 H12 A3.5 3.5 0 0 1 12 9 H5" stroke="#000" stroke-width="1.6" fill="none"/><rect x="1" y="10.5" width="15.5" height="5.5" fill="#fff" stroke="#3a5aa8" stroke-width="1.1"/><path d="M2.5 11.5 V15 M1.8 11.5 H3.2 M1.8 15 H3.2" stroke="#e01818" stroke-width="0.8"/></svg>
<div style="left:451.00px;top:401.00px;width:188.70px;height:85.00px;background:#fff;border:1px solid #dfe3e8;box-sizing:border-box;"></div>
<div style="left:451.00px;top:401.00px;width:188.70px;height:18.00px;background:#e6e9ee;"></div>
<div class="ct" style="left:451.00px;top:401.00px;width:188.70px;height:18.00px;font-size:10.6px;font-weight:bold;color:#111;">Analysis Summary</div>
<div style="left:451.00px;top:432.60px;width:188.70px;height:0.80px;background:#e6e9ee;"></div>
<div style="left:451.00px;top:446.60px;width:188.70px;height:0.80px;background:#e6e9ee;"></div>
<div style="left:451.00px;top:460.00px;width:188.70px;height:0.80px;background:#e6e9ee;"></div>
<div style="left:451.00px;top:472.60px;width:188.70px;height:0.80px;background:#e6e9ee;"></div>
<div style="left:544.50px;top:432.60px;width:0.80px;height:27.40px;background:#e6e9ee;"></div>
<div style="left:544.50px;top:472.60px;width:0.80px;height:13.40px;background:#e6e9ee;"></div>
<div class="t" style="left:452.50px;top:421.30px;font-size:11px;font-weight:bold;color:#111;">Parameters</div>
<div class="t" style="left:452.50px;top:435.30px;font-size:10.2px;color:#222;">Beta</div>
<div class="t" style="left:547.00px;top:435.30px;font-size:10.2px;color:#222;">0.721358</div>
<div class="t" style="left:452.50px;top:448.80px;font-size:10.2px;color:#222;">Eta (Hr)</div>
<div class="t" style="left:547.00px;top:448.80px;font-size:10.2px;color:#222;">1279.895773</div>
<div class="t" style="left:452.50px;top:462.30px;font-size:11px;font-weight:bold;color:#111;">Other</div>
<div class="t" style="left:452.50px;top:475.30px;font-size:10.2px;color:#222;">Rho</div>
<div class="t" style="left:547.00px;top:475.30px;font-size:10.2px;color:#222;">0.943784</div>
<div style="left:422.00px;top:494.00px;width:220.60px;height:13.00px;background:#dedede;border:1px solid #b8b8b8;box-sizing:border-box;border-radius:2px;"></div>
<svg style="position:absolute;left:527.00px;top:497.50px" width="10" height="7" viewBox="0 0 10 7"><path d="M1 1 H9 L5 5.5 Z" fill="#555"/></svg>
<div style="left:421.00px;top:507.00px;width:223.00px;height:6.00px;background:linear-gradient(#e2e8f0,#bfcbdb);"></div>
<div style="left:520.50px;top:509.20px;width:2.30px;height:2.30px;background:#f4f6f9;"></div>
<div style="left:526.10px;top:509.20px;width:2.30px;height:2.30px;background:#f4f6f9;"></div>
<div style="left:531.70px;top:509.20px;width:2.30px;height:2.30px;background:#f4f6f9;"></div>
<div style="left:537.30px;top:509.20px;width:2.30px;height:2.30px;background:#f4f6f9;"></div>
<div style="left:542.90px;top:509.20px;width:2.30px;height:2.30px;background:#f4f6f9;"></div>
<div style="left:421.00px;top:513.00px;width:223.00px;height:26.50px;background:linear-gradient(#fdfdfe,#f3f5f8 50%,#e6eaf0);border-bottom:2px solid #b4c2d4;box-sizing:border-box;"></div>
<svg style="position:absolute;left:431.00px;top:520.00px" width="13" height="13" viewBox="0 0 13 13"><rect x="1.5" y="1" width="11" height="11.5" fill="#fff" stroke="#999" stroke-width="0.7"/><rect x="0" y="2" width="11" height="5" fill="#1a62c0"/><text x="5.5" y="6.3" font-size="5" font-weight="bold" font-family="Liberation Sans" fill="#fff" text-anchor="middle">W</text></svg>
<div class="t" style="left:450.00px;top:521.50px;font-size:11px;font-weight:bold;color:#111;">Main</div>
<div style="left:421.00px;top:539.50px;width:223.00px;height:27.00px;background:linear-gradient(#eef1f5,#dde3eb 50%,#c9d3df);border-bottom:2px solid #b4c2d4;box-sizing:border-box;"></div>
<svg style="position:absolute;left:430.00px;top:546.00px" width="16" height="15" viewBox="0 0 16 15"><rect x="3" y="1.5" width="12" height="12.5" fill="#fff" stroke="#7a8aa0" stroke-width="0.8"/><text x="9.5" y="11" font-size="10" font-weight="bold" font-family="Liberation Sans" fill="#111" text-anchor="middle">Σ</text><path d="M5 1.5 C3 1.5 4 13 1.5 13" stroke="#e01818" stroke-width="1.2" fill="none"/><path d="M7 2 C5 2 6 13.5 3.5 13.5" stroke="#e01818" stroke-width="0.8" fill="none"/></svg>
<div class="t" style="left:450.00px;top:549.00px;font-size:10.2px;color:#111;">Analysis</div>
<div style="left:421.00px;top:566.50px;width:223.00px;height:33.50px;background:linear-gradient(#f1f3f7,#dde3eb 60%,#cdd6e2);"></div>
<div style="left:567.50px;top:573.00px;width:21.50px;height:21.00px;background:linear-gradient(#f6f8fa,#e2e7ee);border:1px solid #c4cdd9;box-sizing:border-box;border-radius:2px;"></div>
<div style="left:592.60px;top:573.00px;width:21.50px;height:21.00px;background:linear-gradient(#f6f8fa,#e2e7ee);border:1px solid #c4cdd9;box-sizing:border-box;border-radius:2px;"></div>
<div style="left:617.80px;top:573.00px;width:21.50px;height:21.00px;background:linear-gradient(#f6f8fa,#e2e7ee);border:1px solid #c4cdd9;box-sizing:border-box;border-radius:2px;"></div>
<svg style="position:absolute;left:571.00px;top:574.50px" width="16" height="16" viewBox="0 0 16 16"><rect x="1" y="3.5" width="14" height="11" rx="1.2" fill="#fff" stroke="#1c2c4a" stroke-width="1.3"/><path d="M1.5 2.5 H14.5 M2 1v2.5 M4 1v2.5 M6 1v2.5 M8 1v2.5 M10 1v2.5 M12 1v2.5 M14 1v2.5" stroke="#1c2c4a" stroke-width="0.8"/><rect x="2" y="4.5" width="4.5" height="9" fill="#e8f0fa"/><path d="M7 3.5 V14.5" stroke="#1c2c4a" stroke-width="1.4"/><path d="M9 6.5h4.5 M9 9h4.5 M9 11.5h4.5" stroke="#1c2c4a" stroke-width="1.2"/></svg>
<svg style="position:absolute;left:595.50px;top:574.50px" width="17" height="17" viewBox="0 0 17 17"><path d="M1 7 L6 9" stroke="#999" stroke-width="0.8"/><path d="M8 1 L11.5 4.5 L8 8 L4.5 4.5 Z" fill="#30a030"/><path d="M12 5 L15.5 8.5 L12 12 L8.5 8.5 Z" fill="#e02828"/><path d="M8 9 L11.5 12.5 L8 16 L4.5 12.5 Z" fill="#1e5ed8"/><path d="M5 6 L8 9 L5 12 L2 9 Z" fill="#f0d018"/><rect x="6.8" y="3.4" width="2.4" height="2.2" fill="#fff"/><rect x="10.8" y="7.4" width="2.4" height="2.2" fill="#fff"/><rect x="6.8" y="11.4" width="2.4" height="2.2" fill="#fff"/><rect x="3.8" y="7.9" width="2.2" height="2.2" fill="#fff"/></svg>
<svg style="position:absolute;left:620.50px;top:578.50px" width="17" height="10" viewBox="0 0 17 10"><path d="M1 1.5 Q8 0 16 1.5 L15.5 8.5 Q8 7.5 1.5 8.5 Z" fill="#68d468" stroke="#48b048" stroke-width="0.7"/><path d="M2 2.5 Q8 1.2 15 2.5 L15 4 Q8 3 2 4 Z" fill="#8ee88e"/></svg>
<div style="left:451.00px;top:320.00px;width:188.50px;height:74.00px;background:#fff;border:1px solid #444;box-sizing:border-box;"></div>
<div style="left:451.00px;top:342.20px;width:188.50px;height:1.00px;background:#444;"></div>
<div style="left:451.00px;top:359.20px;width:188.50px;height:1.00px;background:#444;"></div>
<div style="left:451.00px;top:376.20px;width:188.50px;height:1.00px;background:#444;"></div>
<div style="left:544.20px;top:342.20px;width:1.00px;height:34.30px;background:#222;"></div>
<div class="ct" style="left:451.00px;top:320.00px;width:188.50px;height:22.50px;font-size:10.2px;color:#222;padding-top:1px;box-sizing:border-box;">Settings</div>
<div class="ct" style="left:451.00px;top:342.50px;width:93.50px;height:17.00px;font-size:10.2px;color:#1c1cf0;letter-spacing:-0.45px;padding-top:1px;box-sizing:border-box;">RRX</div>
<div class="ct" style="left:545.00px;top:342.50px;width:94.50px;height:17.00px;font-size:10.2px;color:#1c1cf0;letter-spacing:-0.45px;padding-top:1px;box-sizing:border-box;">SRM</div>
<div class="ct" style="left:545.00px;top:359.50px;width:94.50px;height:17.00px;font-size:10.2px;color:#1c1cf0;letter-spacing:-0.45px;padding-top:1px;box-sizing:border-box;">MED</div>
<div class="ct" style="left:451.00px;top:376.50px;width:188.50px;height:17.00px;font-size:10.2px;color:#222;padding-top:1px;box-sizing:border-box;">F=4/S=0</div>
</body></html>
